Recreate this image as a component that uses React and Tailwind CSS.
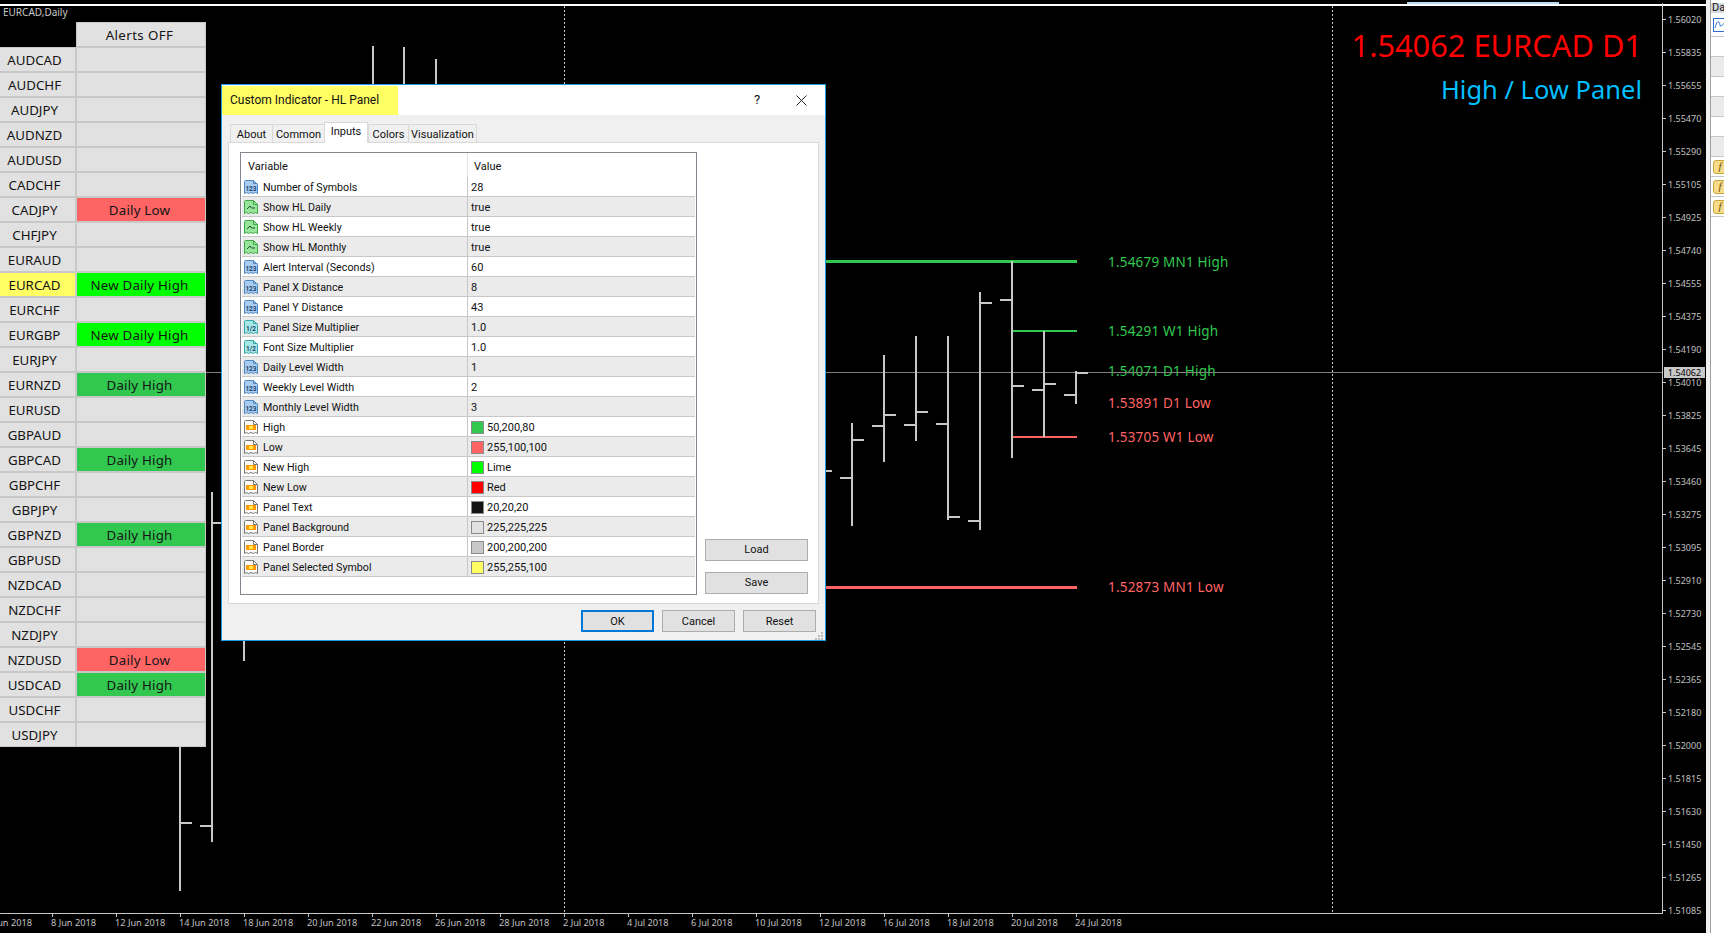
import React from 'react';

const symbols = [
  ['AUDCAD'], ['AUDCHF'], ['AUDJPY'], ['AUDNZD'], ['AUDUSD'], ['CADCHF'],
  ['CADJPY', 'Daily Low', 'bg-[#ff6464]'], ['CHFJPY'], ['EURAUD'],
  ['EURCAD', 'New Daily High', 'bg-[#00ff00]', true], ['EURCHF'],
  ['EURGBP', 'New Daily High', 'bg-[#00ff00]'], ['EURJPY'],
  ['EURNZD', 'Daily High', 'bg-[#32c850]'], ['EURUSD'], ['GBPAUD'],
  ['GBPCAD', 'Daily High', 'bg-[#32c850]'], ['GBPCHF'], ['GBPJPY'],
  ['GBPNZD', 'Daily High', 'bg-[#32c850]'], ['GBPUSD'], ['NZDCAD'], ['NZDCHF'], ['NZDJPY'],
  ['NZDUSD', 'Daily Low', 'bg-[#ff6464]'], ['USDCAD', 'Daily High', 'bg-[#32c850]'], ['USDCHF'], ['USDJPY'],
];

const inputs = [
  ['num', 'Number of Symbols', '28'],
  ['bool', 'Show HL Daily', 'true'],
  ['bool', 'Show HL Weekly', 'true'],
  ['bool', 'Show HL Monthly', 'true'],
  ['num', 'Alert Interval (Seconds)', '60'],
  ['num', 'Panel X Distance', '8'],
  ['num', 'Panel Y Distance', '43'],
  ['half', 'Panel Size Multiplier', '1.0'],
  ['half', 'Font Size Multiplier', '1.0'],
  ['num', 'Daily Level Width', '1'],
  ['num', 'Weekly Level Width', '2'],
  ['num', 'Monthly Level Width', '3'],
  ['color', 'High', '50,200,80', 'bg-[#32c850]'],
  ['color', 'Low', '255,100,100', 'bg-[#ff6464]'],
  ['color', 'New High', 'Lime', 'bg-[#00ff00]'],
  ['color', 'New Low', 'Red', 'bg-[#ff0000]'],
  ['color', 'Panel Text', '20,20,20', 'bg-[#141414]'],
  ['color', 'Panel Background', '225,225,225', 'bg-[#e1e1e1]'],
  ['color', 'Panel Border', '200,200,200', 'bg-[#c8c8c8]'],
  ['color', 'Panel Selected Symbol', '255,255,100', 'bg-[#ffff64]'],
];

const prices = [
  '1.56020', '1.55835', '1.55655', '1.55470', '1.55290', '1.55105', '1.54925', '1.54740', '1.54555', '1.54375',
  '1.54190', '1.54010', '1.53825', '1.53645', '1.53460', '1.53275', '1.53095', '1.52910', '1.52730', '1.52545',
  '1.52365', '1.52180', '1.52000', '1.51815', '1.51630', '1.51450', '1.51265', '1.51085',
];

const dates = [
  '6 Jun 2018', '8 Jun 2018', '12 Jun 2018', '14 Jun 2018', '18 Jun 2018', '20 Jun 2018', '22 Jun 2018', '26 Jun 2018',
  '28 Jun 2018', '2 Jul 2018', '4 Jul 2018', '6 Jul 2018', '10 Jul 2018', '12 Jul 2018', '16 Jul 2018', '18 Jul 2018',
  '20 Jul 2018', '24 Jul 2018',
];

// x, high, low, open tick y, close tick y
const bars = [
  [180, 500, 891, null, 823], [212, 492, 842, 826, 523], [244, 300, 661, null, null],
  [373, 46, 120, null, null], [404, 47, 120, null, null], [436, 59, 120, null, null],
  [820, 300, 500, null, 471],
  [852, 423, 526, 478, 440], [884, 355, 462, 426, 415], [916, 336, 441, 425, 412], [948, 336, 520, 424, 517],
  [980, 292, 530, 521, 303], [1012, 261, 458, 300, 386], [1044, 331, 437, 390, 384], [1076, 371, 404, 395, 373],
];

const levels = [
  ['1.54679 MN1 High', 'top-[253px]', 'text-[#32c850]'],
  ['1.54291 W1 High', 'top-[322px]', 'text-[#32c850]'],
  ['1.54071 D1 High', 'top-[362px]', 'text-[#32c850]'],
  ['1.53891 D1 Low', 'top-[394px]', 'text-[#ff6464]'],
  ['1.53705 W1 Low', 'top-[428px]', 'text-[#ff6464]'],
  ['1.52873 MN1 Low', 'top-[578px]', 'text-[#ff6464]'],
];

const tabs = [
  ['About', 'w-[42px]'], ['Common', 'w-[52px]'], ['Inputs', 'w-[44px]', true], ['Colors', 'w-[40px]'], ['Visualization', 'w-[69px]'],
];

const docPath = 'M1.5 2.5C1.5 2 2 1.5 2.5 1.5H10.5L14.5 5.5V14.5L12.5 13.5L10.5 14.5L8 13.5L5.5 14.5L3.5 13.5L1.5 14.5Z';

const InputIcon = ({ type }) => {
  if (type === 'color') {
    return (
      <svg width="16" height="16" viewBox="0 0 16 16" className="mt-[1px] shrink-0">
        <path d={docPath} fill="#fbfbfb" stroke="#777" />
        <path d="M10.5 1.5V5.5H14.5" fill="none" stroke="#777" />
        <rect x="3" y="6" width="10" height="5" fill="#ff9a00" />
        <rect x="6" y="7" width="4" height="3" fill="#ffe94d" />
      </svg>
    );
  }
  if (type === 'bool') {
    return (
      <svg width="16" height="16" viewBox="0 0 16 16" className="mt-[1px] shrink-0">
        <path d={docPath} fill="#98e49a" stroke="#3fa84a" />
        <path d="M10.5 1.5V5.5H14.5" fill="none" stroke="#3fa84a" />
        <path d="M4 10L7 7L8.5 9H12" fill="none" stroke="#14532d" />
      </svg>
    );
  }
  const half = type === 'half';
  const edge = half ? '#3aa6a8' : '#4d86c0';
  return (
    <svg width="16" height="16" viewBox="0 0 16 16" className="mt-[1px] shrink-0">
      <path d={docPath} fill={half ? '#a6e8e6' : '#a9cdf0'} stroke={edge} />
      <path d="M10.5 1.5V4.5H14.5" fill="none" stroke={edge} />
      <text x="8" y="11.5" textAnchor="middle" fontSize="6.5" fontWeight="700" fontFamily="Roboto, sans-serif" fill="#17406e">
        {half ? '1/2' : '123'}
      </text>
    </svg>
  );
};

const ChartDrawing = () => (
  <svg width="1706" height="933" className="absolute left-0 top-0">
    <line x1="564.5" y1="6" x2="564.5" y2="913" stroke="#c8c8c8" strokeDasharray="2 2" />
    <line x1="1332.5" y1="6" x2="1332.5" y2="913" stroke="#c8c8c8" strokeDasharray="2 2" />
    <rect x="0" y="372" width="1663" height="1" fill="#808080" />
    <rect x="826" y="260" width="251" height="3" fill="#32c850" />
    <rect x="1013" y="330" width="64" height="2" fill="#32c850" />
    <rect x="1013" y="436" width="64" height="2" fill="#ff6464" />
    <rect x="826" y="586" width="251" height="3" fill="#ff6464" />
    {bars.map(([x, high, low, open, close]) => (
      <g key={x} fill="#c8c8c8">
        <rect x={x - 1} y={high} width="2" height={low - high} />
        {open && <rect x={x - 12} y={open - 1} width="12" height="2" />}
        {close && <rect x={x} y={close - 1} width="12" height="2" />}
      </g>
    ))}
    {dates.map((d, i) => (
      <rect key={d} x={-12 + i * 64} y="913" width="1" height="4" fill="#c8c8c8" />
    ))}
  </svg>
);

const SymbolPanel = () => (
  <div className="absolute left-0 top-[22px] w-[206px] font-['Noto_Sans',sans-serif] text-[13.3px] text-[#141414]">
    <div className="flex h-[25px]">
      <div className="w-[76px]" />
      <div className="flex w-[130px] items-center justify-center border border-[#c8c8c8] bg-[#e1e1e1] pr-[3px] pt-[2px] tracking-[0.4px]">Alerts OFF</div>
    </div>
    {symbols.map(([name, status, color, selected]) => (
      <div key={name} className="flex h-[25px]">
        <div className={`flex w-[76px] items-center justify-center border border-l-0 border-[#c8c8c8] pr-[6px] pt-[2px] ${selected ? 'bg-[#ffff64]' : 'bg-[#e1e1e1]'}`}>
          {name}
        </div>
        <div className={`flex w-[130px] items-center justify-center border border-[#c8c8c8] pr-[3px] pt-[2px] tracking-[0.2px] ${color || 'bg-[#e1e1e1]'}`}>
          {status}
        </div>
      </div>
    ))}
  </div>
);

const PushButton = ({ children, className = '' }) => (
  <div className={`flex h-[22px] items-center justify-center bg-[#e1e1e1] ${className}`}>{children}</div>
);

const IndicatorDialog = () => (
  <div className="absolute left-[221px] top-[84px] flex h-[557px] w-[605px] flex-col border border-[#1a9ae0] bg-[#f0f0f0] font-['Roboto',sans-serif] text-[11px] text-[#111]">
    <div className="flex h-[30px] items-center bg-white">
      <div className="flex h-[29px] w-[176px] items-center bg-[#ffff64] pl-[8px] text-[12px]">Custom Indicator - HL Panel</div>
      <span className="ml-[356px] text-[13px]">?</span>
      <svg width="11" height="11" viewBox="0 0 11 11" className="ml-[36px]">
        <path d="M0.5 0.5L10.5 10.5M10.5 0.5L0.5 10.5" stroke="#222" />
      </svg>
    </div>
    <div className="ml-[6px] mt-[9px] flex h-[18px] items-end pl-[2px]">
      {tabs.map(([label, width, active]) => (
        <div
          key={label}
          className={`flex items-center justify-center border-[#d9d9d9] ${width} ${active ? 'z-10 -mb-px h-[21px] border border-b-0 bg-white pb-[1px]' : 'h-[18px] border-l border-t pt-[3px] last:border-r'}`}
        >
          {label}
        </div>
      ))}
    </div>
    <div className="ml-[6px] flex h-[462px] w-[591px] border border-[#d9d9d9] bg-white pl-[11px] pt-[9px]">
      <div className="h-[443px] w-[457px] border border-[#828790] bg-white">
        <div className="flex h-[24px] items-center">
          <div className="flex h-full w-[227px] items-center border-r border-[#e5e5e5] pl-[7px] pt-[4px]">Variable</div>
          <div className="pl-[6px] pt-[4px]">Value</div>
        </div>
        {inputs.map(([type, label, value, swatch], i) => (
          <div key={label} className={`ml-px flex h-[20px] w-[453px] items-center border-b border-[#c8c8c8] ${i % 2 ? 'bg-[#ebebeb]' : 'bg-white'}`}>
            <div className="flex h-full w-[226px] items-center border-r border-[#c8c8c8] pl-px">
              <InputIcon type={type} />
              <span className="ml-[4px] pt-[3px] text-[10.7px]">{label}</span>
            </div>
            <div className="flex items-center pl-[3px]">
              {swatch && <span className={`mr-[3px] mt-[1px] h-[13px] w-[13px] border border-[#8a8a8a] ${swatch}`} />}
              <span className="pt-[3px]">{value}</span>
            </div>
          </div>
        ))}
      </div>
      <div className="ml-[8px] flex h-[443px] w-[103px] flex-col justify-end gap-[11px] pb-[1px]">
        <PushButton className="border border-[#adadad] pt-[1px]">Load</PushButton>
        <PushButton className="border border-[#adadad]">Save</PushButton>
      </div>
    </div>
    <div className="relative mt-[6px] flex justify-end gap-[8px] pr-[9px]">
      <PushButton className="w-[73px] border-2 border-[#0078d7] pt-[2px]">OK</PushButton>
      <PushButton className="w-[73px] border border-[#adadad] pt-[2px]">Cancel</PushButton>
      <PushButton className="w-[73px] border border-[#adadad] pt-[2px]">Reset</PushButton>
      <svg width="9" height="9" viewBox="0 0 9 9" className="absolute bottom-[-9px] right-[1px]">
        <path d="M6 0h2v2H6zM3 3h2v2H3zM6 3h2v2H6zM0 6h2v2H0zM3 6h2v2H3zM6 6h2v2H6z" fill="#bdbdbd" />
      </svg>
    </div>
  </div>
);

const SideStrip = () => (
  <aside className="flex h-[933px] w-[18px] bg-[#f0f0f0]">
    <div className="w-[4px]" />
    <div className="flex w-[14px] flex-col overflow-hidden border-l border-[#a0a0a0] bg-white font-['Roboto',sans-serif] text-[11px] text-[#111]">
      <div className="mt-[3px] h-[10px] bg-[#d6dbe0] pl-[1px] leading-[10px]">Da</div>
      <div className="flex h-[24px] items-center border-b border-[#c8c8c8] pl-[2px]">
        <svg width="12" height="14" viewBox="0 0 12 14" className="shrink-0">
          <rect x="0.5" y="0.5" width="13" height="13" fill="#fff" stroke="#2f6fd0" />
          <path d="M2 10C4 2 6 2 7 7C8 11 10 4 12 6" fill="none" stroke="#2f6fd0" />
        </svg>
      </div>
      {[0, 1, 2, 3, 4, 5].map((i) => (
        <div key={i} className={`h-[20px] border-b border-[#c8c8c8] ${i % 2 ? 'bg-[#ebebeb]' : 'bg-white'}`} />
      ))}
      {[0, 1, 2].map((i) => (
        <div key={i} className="flex h-[20px] items-center border-b border-[#c8c8c8] pl-[2px]">
          <span className="flex h-[14px] w-[14px] shrink-0 items-center justify-center rounded-[3px] border border-[#c9a63c] bg-[#f6dc8a] font-['Liberation_Serif',serif] text-[11px] italic text-[#6b4e00]">f</span>
        </div>
      ))}
    </div>
  </aside>
);

export default function App() {
  return (
    <div className="flex h-[933px] w-[1724px] overflow-hidden bg-black">
      <main className="relative h-[933px] w-[1706px]">
        <div className="h-[4px] pt-[2px]">
          <div className="ml-[1407px] h-[2px] w-[152px] bg-[#b9dcf5]" />
        </div>
        <div className="h-[2px] bg-white" />

        <div className="absolute left-[3px] top-[5px] font-['Noto_Sans',sans-serif] text-[10px] leading-[14px] text-[#c8c8c8]">EURCAD,Daily</div>

        <div className="absolute right-[64px] top-[23px] font-['Noto_Sans',sans-serif] text-[30.8px] leading-[44px] text-[#ff0000]">1.54062 EURCAD D1</div>
        <div className="absolute right-[64px] top-[71px] font-['Noto_Sans',sans-serif] text-[25.5px] leading-[36px] text-[#00bfff]">High / Low Panel</div>

        {levels.map(([text, top, color]) => (
          <div key={text} className={`absolute left-[1108px] font-['Noto_Sans',sans-serif] text-[13.5px] leading-[18px] tracking-[0.2px] ${top} ${color}`}>{text}</div>
        ))}

        <ChartDrawing />

        {/* price scale */}
        <div className="absolute left-[1662px] top-[3px] h-[910px] border-l border-[#c8c8c8] font-['Noto_Sans',sans-serif] text-[9px] text-[#c0c0c0]">
          <div className="-mt-[3px] h-[3px]" />
          {prices.map((p) => (
            <div key={p} className="flex h-[33px] w-[44px] items-center">
              <span className="h-px w-[3px] bg-[#c8c8c8]" />
              <span className="ml-[2px]">{p}</span>
            </div>
          ))}
        </div>
        <div className="absolute left-[1664px] top-[367px] flex h-[11px] w-[41px] items-center justify-center bg-[#c8c8c8] font-['Noto_Sans',sans-serif] text-[9px] text-black">1.54062</div>

        {/* time scale */}
        <div className="absolute left-0 top-[913px] h-px w-[1663px] bg-[#c8c8c8]" />
        <div className="absolute left-[-13px] top-[915px] flex font-['Noto_Sans',sans-serif] text-[9.2px] leading-[16px] text-[#c0c0c0]">
          {dates.map((d) => (
            <div key={d} className="w-[64px] whitespace-nowrap">{d}</div>
          ))}
        </div>

        <SymbolPanel />
        <IndicatorDialog />
      </main>
      <SideStrip />
    </div>
  );
}
